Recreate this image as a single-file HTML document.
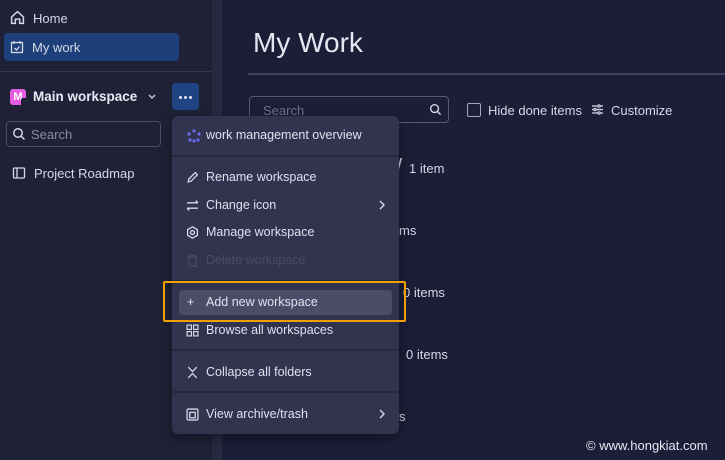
<!DOCTYPE html>
<html><head><style>
*{margin:0;padding:0;box-sizing:border-box}
body{width:725px;height:460px;overflow:hidden;background:#1c1e38;font-family:"Liberation Sans",sans-serif;color:#d5d8e6;position:relative}
.a{position:absolute}
.sb{left:0;top:0;width:212px;height:460px;background:#1f2137}
.strip{left:212px;top:0;width:10px;height:460px;background:#272941}
.t{font-size:13px;white-space:nowrap}
.menu{left:172px;top:116px;width:227px;height:318px;background:#31334f;border-radius:6px;box-shadow:0 4px 12px rgba(0,0,0,.4)}
.mi{position:absolute;left:34px;font-size:12.5px;color:#dfe1ee;white-space:nowrap}
.sep{position:absolute;left:0;width:227px;height:2px;background:#262840}
.ic{position:absolute;left:14px;width:13px;height:13px}
</style></head><body>
<div class="a sb"></div>
<div class="a strip"></div>
<svg class="a" style="left:10px;top:10px" width="15" height="15" viewBox="0 0 14 14" fill="none" stroke="#d5d8e6" stroke-width="1.4"><path d="M1.5 6.5L7 1.5 12.5 6.5V12.5H9V8.5H5V12.5H1.5Z"/></svg>
<div class="a t" style="left:33px;top:11px">Home</div>
<div class="a" style="left:4px;top:33px;width:175px;height:28px;background:#1d3f7a;border-radius:4px"></div>
<svg class="a" style="left:10px;top:40px" width="14" height="14" viewBox="0 0 14 14" fill="none" stroke="#d5d8e6" stroke-width="1.3"><rect x="1.5" y="2.5" width="11" height="10"/><path d="M4 1v3M10 1v3M4.5 8l2 2 3-3.5"/></svg>
<div class="a t" style="left:32px;top:40px">My work</div>
<div class="a" style="left:0;top:71px;width:212px;height:1px;background:#33354e"></div>
<div class="a" style="left:10px;top:89px;width:16px;height:16px;background:#e55ce0;border-radius:3px;color:#fff;font-size:11px;font-weight:bold;text-align:center;line-height:16px">M</div>
<div class="a" style="left:21px;top:98px;width:10px;height:10px;background:#1f2137;border-radius:2px"></div>
<div class="a" style="left:33px;top:89px;font-size:13.5px;font-weight:bold;color:#e8eaf3">Main workspace</div>
<svg class="a" style="left:147px;top:93px" width="10" height="8" viewBox="0 0 10 8" fill="none" stroke="#c8cbdc" stroke-width="1.4"><path d="M2 2l3 3 3-3"/></svg>
<div class="a" style="left:172px;top:83px;width:27px;height:27px;background:#1f4483;border-radius:4px"></div>
<div class="a" style="left:179px;top:96px;width:3px;height:3px;background:#dfe4f5;border-radius:50%"></div>
<div class="a" style="left:184px;top:96px;width:3px;height:3px;background:#dfe4f5;border-radius:50%"></div>
<div class="a" style="left:189px;top:96px;width:3px;height:3px;background:#dfe4f5;border-radius:50%"></div>
<div class="a" style="left:6px;top:121px;width:155px;height:26px;border:1px solid #4b4e66;border-radius:4px"></div>
<svg class="a" style="left:12px;top:127px" width="14" height="14" viewBox="0 0 14 14" fill="none" stroke="#d5d8e6" stroke-width="1.5"><circle cx="6" cy="6" r="4.2"/><path d="M9 9l3.5 3.5"/></svg>
<div class="a t" style="left:31px;top:127px;color:#8a8ca4">Search</div>
<svg class="a" style="left:12px;top:166px" width="14" height="14" viewBox="0 0 14 14" fill="none" stroke="#d5d8e6" stroke-width="1.3"><rect x="1.5" y="2" width="11" height="10" rx="1"/><path d="M5 2v10"/></svg>
<div class="a t" style="left:34px;top:166px">Project Roadmap</div>
<div class="a" style="left:253px;top:27px;font-size:28px;color:#e4e6f0">My Work</div>
<div class="a" style="left:248px;top:73px;width:477px;height:2px;background:#3f4260"></div>
<div class="a" style="left:249px;top:96px;width:200px;height:27px;border:1px solid #555873;border-radius:4px"></div>
<div class="a t" style="left:263px;top:103px;color:#6f7290">Search</div>
<svg class="a" style="left:429px;top:103px" width="13" height="13" viewBox="0 0 14 14" fill="none" stroke="#d5d8e6" stroke-width="1.5"><circle cx="6" cy="6" r="4.2"/><path d="M9 9l3.5 3.5"/></svg>
<div class="a" style="left:467px;top:103px;width:14px;height:14px;border:1px solid #a5a8bd;border-radius:2px"></div>
<div class="a t" style="left:488px;top:103px">Hide done items</div>
<svg class="a" style="left:591px;top:103px" width="13" height="13" viewBox="0 0 13 13" fill="none" stroke="#d5d8e6" stroke-width="1.2"><path d="M1 3h11M1 6.5h11M1 10h11"/><circle cx="8" cy="3" r="1.2" fill="#1c1e38"/><circle cx="4" cy="6.5" r="1.2" fill="#1c1e38"/><circle cx="8" cy="10" r="1.2" fill="#1c1e38"/></svg>
<div class="a t" style="left:611px;top:103px">Customize</div>
<div class="a" style="left:396px;top:154px;font-size:22px;color:#d5d8e6">/</div>
<div class="a t" style="left:409px;top:161px">1 item</div>
<div class="a t" style="left:399px;top:223px">ms</div>
<div class="a t" style="left:403px;top:285px">0 items</div>
<div class="a t" style="left:406px;top:347px">0 items</div>
<div class="a t" style="left:399px;top:409px">s</div>
<div class="a" style="left:586px;top:438px;font-size:13px;color:#e6e8f0">© www.hongkiat.com</div>
<div class="a menu">
<svg class="ic" style="top:12px;width:16px;height:16px" viewBox="0 0 16 16" fill="#6c6cf0"><circle cx="8" cy="3" r="1.6"/><circle cx="8" cy="13" r="1.6"/><circle cx="3" cy="6" r="1.6"/><circle cx="13" cy="6" r="1.6"/><circle cx="4" cy="12" r="1.6"/><circle cx="12" cy="12" r="1.6"/></svg>
<div class="mi" style="top:12px">work management overview</div>
<div class="sep" style="top:39px"></div>
<svg class="ic" style="top:55px" viewBox="0 0 12 12" fill="none" stroke="#d5d8e6" stroke-width="1.2"><path d="M2 10l.5-2.5L8.5 1.5l2 2L4.5 9.5Z"/></svg>
<div class="mi" style="top:54px">Rename workspace</div>
<svg class="ic" style="top:83px" viewBox="0 0 12 12" fill="none" stroke="#d5d8e6" stroke-width="1.2"><path d="M1 3.5h10M9 1.5l2 2M11 8.5H1M3 10.5l-2-2"/></svg>
<div class="mi" style="top:82px">Change icon</div>
<svg class="a" style="left:206px;top:84px" width="8" height="10" viewBox="0 0 8 10" fill="none" stroke="#d5d8e6" stroke-width="1.4"><path d="M2 1l4 4-4 4"/></svg>
<svg class="ic" style="top:110px" viewBox="0 0 12 12" fill="none" stroke="#d5d8e6" stroke-width="1.2"><path d="M6 .8l4.5 2.6v5.2L6 11.2 1.5 8.6V3.4Z"/><circle cx="6" cy="6" r="1.8"/></svg>
<div class="mi" style="top:109px">Manage workspace</div>
<svg class="ic" style="top:138px" viewBox="0 0 12 12" fill="none" stroke="#4a4c66" stroke-width="1.2"><path d="M1 3h10M4 3V1.5h4V3M2.5 3l.7 8h5.6l.7-8"/></svg>
<div class="mi" style="top:137px;color:#4a4c66">Delete workspace</div>
<div class="sep" style="top:164px"></div>
<div class="a" style="left:7px;top:174px;width:213px;height:25px;background:#4b4d68;border-radius:3px"></div>
<div class="mi" style="left:15px;top:179px">+</div>
<div class="mi" style="top:179px">Add new workspace</div>
<svg class="ic" style="top:208px" viewBox="0 0 12 12" fill="none" stroke="#d5d8e6" stroke-width="1.1"><rect x="1" y="1" width="4" height="4"/><rect x="7" y="1" width="4" height="4"/><rect x="1" y="7" width="4" height="4"/><rect x="7" y="7" width="4" height="4"/></svg>
<div class="mi" style="top:207px">Browse all workspaces</div>
<div class="sep" style="top:233px"></div>
<svg class="ic" style="top:250px" viewBox="0 0 12 12" fill="none" stroke="#d5d8e6" stroke-width="1.2"><path d="M2 1l4 4 4-4M2 11l4-4 4 4"/></svg>
<div class="mi" style="top:249px">Collapse all folders</div>
<div class="sep" style="top:275px"></div>
<svg class="ic" style="top:292px" viewBox="0 0 12 12" fill="none" stroke="#d5d8e6" stroke-width="1.2"><rect x="1" y="1" width="10" height="10" rx="1"/><rect x="3.5" y="4" width="5" height="5"/></svg>
<div class="mi" style="top:291px">View archive/trash</div>
<svg class="a" style="left:206px;top:293px" width="8" height="10" viewBox="0 0 8 10" fill="none" stroke="#d5d8e6" stroke-width="1.4"><path d="M2 1l4 4-4 4"/></svg>
</div>
<div class="a" style="left:163px;top:281px;width:243px;height:41px;border:2px solid #f0a000;border-radius:2px"></div>
</body></html>
